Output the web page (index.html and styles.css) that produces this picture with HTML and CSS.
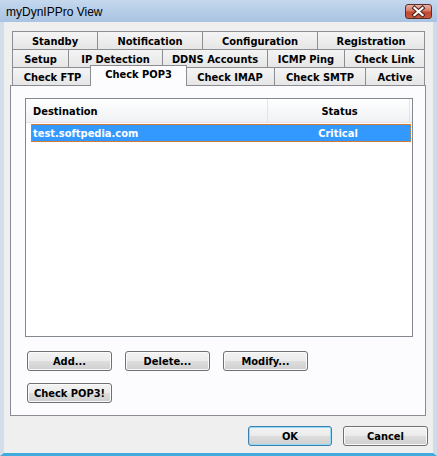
FILE: index.html
```html
<!DOCTYPE html>
<html>
<head>
<meta charset="utf-8">
<link rel="stylesheet" href="styles.css">
</head>
<body>
<div class="window">
  <div class="titlebar">
    <span class="title">myDynIPPro View</span>
    <button class="close" aria-label="Close">
      <svg width="27" height="15" viewBox="0 0 27 15">
        <path d="M9.5 4 L17.5 11 M17.5 4 L9.5 11" stroke="#4a2420" stroke-width="4.2" stroke-linecap="square" fill="none"/>
        <path d="M9.5 4 L17.5 11 M17.5 4 L9.5 11" stroke="#ffffff" stroke-width="2.2" stroke-linecap="square" fill="none"/>
      </svg>
    </button>
  </div>
  <div class="client">
    <div class="tabs">
      <div class="tabrow row1">
        <div class="tab">Standby</div>
        <div class="tab">Notification</div>
        <div class="tab">Configuration</div>
        <div class="tab last">Registration</div>
      </div>
      <div class="tabrow row2">
        <div class="tab">Setup</div>
        <div class="tab">IP Detection</div>
        <div class="tab">DDNS Accounts</div>
        <div class="tab">ICMP Ping</div>
        <div class="tab last">Check Link</div>
      </div>
      <div class="tabrow row3">
        <div class="tab">Check FTP</div>
        <div class="tab active">Check POP3</div>
        <div class="tab">Check IMAP</div>
        <div class="tab">Check SMTP</div>
        <div class="tab last">Active</div>
      </div>
    </div>
    <div class="panel">
      <div class="listview">
        <div class="header">
          <div class="hcol hdest">Destination</div>
          <div class="hcol hstatus">Status</div>
          <div class="hrest"></div>
        </div>
        <div class="row selected">
          <div class="cdest">test.softpedia.com</div>
          <div class="cstatus">Critical</div>
        </div>
      </div>
      <div class="btnrow">
        <button class="btn">Add...</button>
        <button class="btn">Delete...</button>
        <button class="btn">Modify...</button>
      </div>
      <div class="btnrow second">
        <button class="btn">Check POP3!</button>
      </div>
    </div>
    <div class="dialogbtns">
      <button class="btn ok">OK</button>
      <button class="btn">Cancel</button>
    </div>
  </div>
</div>
</body>
</html>
```
FILE: styles.css
```css
* { box-sizing: border-box; }
html, body { margin: 0; padding: 0; }
body {
  width: 437px;
  height: 456px;
  overflow: hidden;
  font-family: "DejaVu Sans Condensed", "DejaVu Sans", sans-serif;
  font-stretch: condensed;
  font-weight: bold;
  font-size: 11px;
  color: #000;
}
.window {
  width: 437px;
  height: 456px;
  display: flex;
  flex-direction: column;
  background: #c4d6ea;
}
.titlebar {
  height: 22px;
  flex: none;
  display: flex;
  align-items: center;
  justify-content: space-between;
  padding: 0 5px 0 6px;
  background: linear-gradient(#c5d8ee, #b3cbe6 60%, #a9c3e2);
}
.title {
  font-family: "Liberation Sans", Arial, sans-serif;
  font-weight: normal;
  font-stretch: normal;
  font-size: 12px;
  color: #000;
  padding-top: 2px;
}
.close {
  width: 27px;
  height: 15px;
  padding: 0;
  border: 1px solid #5c2e28;
  border-radius: 3px;
  background: linear-gradient(#eab2a6, #d97a66 45%, #c3472f 55%, #c8583c);
  display: flex;
  align-items: center;
  justify-content: center;
  overflow: hidden;
}
.close svg { display: block; margin: -1px; }
.client {
  flex: 1;
  display: flex;
  flex-direction: column;
  background: #efefef;
  border-left: 4px solid #d3deea;
  border-right: 4px solid #cfdbe8;
  border-bottom: 3px solid #44a9dd;
  padding: 9px 7px 0 6px;
}
.tabs {
  margin-left: 2px;
  width: 413px;
}
.tabrow {
  display: grid;
  height: 18px;
}
.row1 { grid-template-columns: 85px 105px 115px 108px; }
.row2 { grid-template-columns: 56px 94px 105px 77px 81px; }
.row3 { grid-template-columns: 80px 93px 89px 91px 60px; }
.tab {
  border-top: 1px solid #8c8e94;
  border-left: 1px solid #8c8e94;
  background: linear-gradient(#f4f4f4, #e6e6e6);
  display: flex;
  align-items: center;
  justify-content: center;
  white-space: nowrap;
  padding-top: 1px;
}
.tab.last { border-right: 1px solid #8c8e94; }
.tab.active {
  position: relative;
  z-index: 1;
  margin: -2px -2px -1px -2px;
  background: #fcfcfe;
  border-right: 1px solid #8c8e94;
  padding-top: 0;
  padding-bottom: 3px;
}
.panel {
  width: 416px;
  height: 331px;
  flex: none;
  border: 1px solid #898c95;
  background: #fcfcfe;
  padding: 12px 0 0 14px;
}
.listview {
  width: 388px;
  height: 239px;
  border: 1px solid #828790;
  background: #ffffff;
}
.header {
  display: flex;
  height: 24px;
  background: linear-gradient(#ffffff, #f7f8f9 50%, #f1f2f4);
  border-bottom: 1px solid #e5e5e5;
}
.hcol {
  display: flex;
  align-items: center;
  border-right: 1px solid #e3e4e6;
  padding-top: 1px;
}
.hdest { width: 242px; padding-left: 7px; }
.hstatus { width: 142px; justify-content: center; padding-left: 2px; }
.hrest { flex: 1; }
.row {
  display: flex;
  height: 18px;
  margin: 1px 0 0 5px;
  width: 380px;
}
.row.selected {
  background: #3399ff;
  color: #ffffff;
  border: 1px dotted #d6803c;
}
.cdest {
  width: 236px;
  padding-left: 1px;
  display: flex;
  align-items: center;
}
.cstatus {
  flex: 1;
  display: flex;
  align-items: center;
  justify-content: center;
  padding-right: 2px;
}
.btnrow {
  display: flex;
  gap: 13px;
  margin-top: 14px;
  margin-left: 2px;
}
.btnrow.second { margin-top: 12px; }
.btn {
  width: 85px;
  height: 20px;
  padding: 0;
  border: 1px solid #707070;
  border-radius: 3px;
  background: linear-gradient(#f3f3f3, #ebebeb 48%, #dddddd 52%, #cfcfcf);
  font: inherit;
  font-stretch: condensed;
  color: #000;
  box-shadow: inset 0 0 0 1px #fafafa;
}
.dialogbtns {
  display: flex;
  justify-content: flex-end;
  gap: 11px;
  margin-top: 10px;
  margin-right: -2px;
}
.btn.ok {
  width: 84px;
  border-color: #3c7fb1;
  box-shadow: inset 0 0 0 1px #8fdcf8;
}
```
